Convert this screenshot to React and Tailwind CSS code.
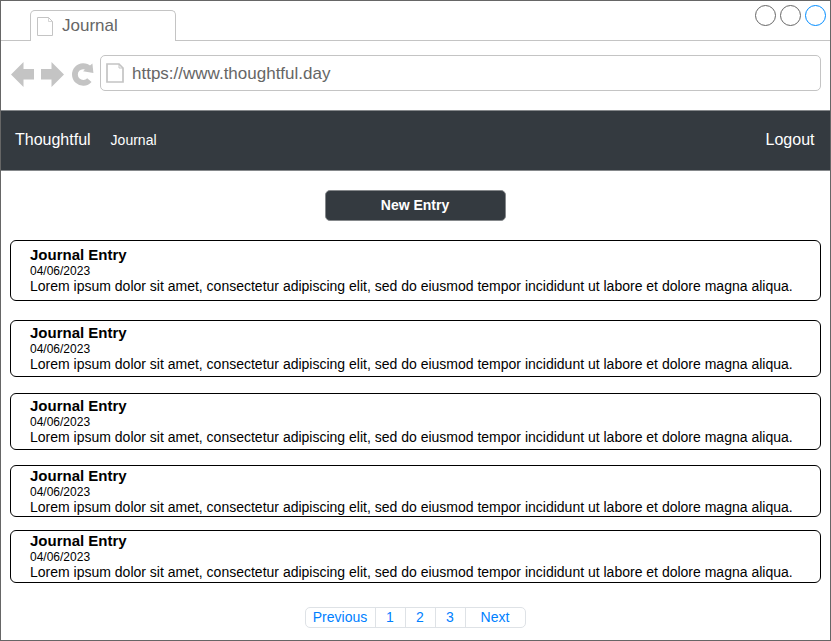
const LOREM =
  'Lorem ipsum dolor sit amet, consectetur adipiscing elit, sed do eiusmod tempor incididunt ut labore et dolore magna aliqua.';

const entries = [
  'mt-[19px] h-[61px] pt-[5px]',
  'mt-[19px] h-[57px] pt-[3px]',
  'mt-[16px] h-[57px] pt-[3px]',
  'mt-[15px] h-[52px] pt-[1px]',
  'mt-[13px] h-[53px] pt-[1px]',
];

function TabPageIcon() {
  return (
    <svg className="mt-[5px] h-5 w-[17px]" viewBox="0 0 17 20" fill="none" stroke="#c4c4c4">
      <path d="M.5 1.500H11.500L15.500 5.500V19.500H.5Z" />
      <path d="M11.500 1.500V5.500H15.500" strokeWidth=".7" />
    </svg>
  );
}

function PageIcon() {
  return (
    <svg className="h-5 w-[18px]" viewBox="0 0 18 20" fill="none" stroke="#c4c4c4" strokeWidth="1.7">
      <path d="M1 1H13L17 5V19H1Z" />
      <path d="M13 1V5H17" strokeWidth="1" />
    </svg>
  );
}

function BrowserTabs() {
  return (
    <div className="flex h-10 shrink-0">
      <div className="w-[29px] border-b border-[#c4c4c4]" />
      <div className="mt-[9px] flex h-[31px] w-[146px] rounded-t-[5px] border border-b-0 border-[#c4c4c4] pl-[6px]">
        <TabPageIcon />
        <span className="ml-[8px] mt-[5px] text-[17px] leading-[20px] text-[#666]">Journal</span>
      </div>
      <div className="flex flex-1 justify-end gap-1 border-b border-[#c4c4c4] pr-1 pt-1">
        <span className="size-[21px] rounded-full border border-[#666]" />
        <span className="size-[21px] rounded-full border border-[#666]" />
        <span className="size-[21px] rounded-full border border-[#008cff]" />
      </div>
    </div>
  );
}

function AddressBar() {
  return (
    <div className="flex h-[69px] shrink-0 pl-[10px] pr-[9px] pt-[14px]">
      <svg className="mt-[7px] h-[26px] w-[84px] shrink-0" viewBox="0 0 84 26" fill="#c4c4c4">
        <path d="M0 12.500 12.500 0V7H23V17.500H12.500V25Z" />
        <path d="M53 12.500 40.500 0V7H30V17.500H40.500V25Z" />
        <path d="M78 6.600A8.300 8.300 0 1 0 78.400 18.100" fill="none" stroke="#c4c4c4" strokeWidth="5.800" />
        <path d="M81.400 1.600 82.400 10.900 72 9.200Z" />
      </svg>
      <div className="ml-[5px] flex h-9 flex-1 items-center rounded-[5px] border border-[#c4c4c4] pl-[5px]">
        <PageIcon />
        <span className="ml-[8px] mt-[2px] text-[17px] leading-[20px] text-[#666]">https://www.thoughtful.day</span>
      </div>
    </div>
  );
}

function Navbar() {
  return (
    <nav className="flex h-[61px] shrink-0 items-center border-y border-[#85888b] bg-[#343a40] pb-[2px] pl-[14px] pr-[15.5px] text-white">
      <span className="text-[16px] leading-5">Thoughtful</span>
      <span className="ml-[20px] text-[14px] leading-5">Journal</span>
      <span className="ml-auto text-[16px] leading-5">Logout</span>
    </nav>
  );
}

function Entry({ className }) {
  return (
    <article className={`shrink-0 rounded-[6px] border border-black pl-[19px] text-black ${className}`}>
      <h2 className="text-[15px] font-bold leading-[17px]">Journal Entry</h2>
      <p className="text-[12px] leading-[17px]">04/06/2023</p>
      <p className="-mt-px whitespace-nowrap text-[14px] leading-[14px]">{LOREM}</p>
    </article>
  );
}

function Pagination() {
  return (
    <div className="mx-auto mt-6 flex h-[21px] w-[221px] shrink-0 divide-x divide-[#dee2e6] rounded-[5px] border border-[#dee2e6] text-center text-[14px] leading-[19px] text-[#0080ff]">
      <span className="w-[70px] pr-px">Previous</span>
      <span className="w-[30px] pr-px">1</span>
      <span className="w-[30px] pr-px">2</span>
      <span className="w-[30px] pr-px">3</span>
      <span className="flex-1 pr-px">Next</span>
    </div>
  );
}

export default function App() {
  return (
    <div className="flex h-[641px] w-[831px] flex-col overflow-hidden border border-[#666] bg-white font-['Liberation_Sans',Arial,sans-serif]">
      <BrowserTabs />
      <AddressBar />
      <Navbar />
      <main className="flex flex-1 flex-col px-[9px] pt-[19px]">
        <button className="mx-auto h-[31px] w-[181px] shrink-0 rounded-[5px] border border-[#85888b] bg-[#343a40] pl-[6px] pr-[7px] text-[14px] font-bold leading-[29px] text-white">
          New Entry
        </button>
        {entries.map((spacing, i) => (
          <Entry key={i} className={spacing} />
        ))}
        <Pagination />
      </main>
    </div>
  );
}
